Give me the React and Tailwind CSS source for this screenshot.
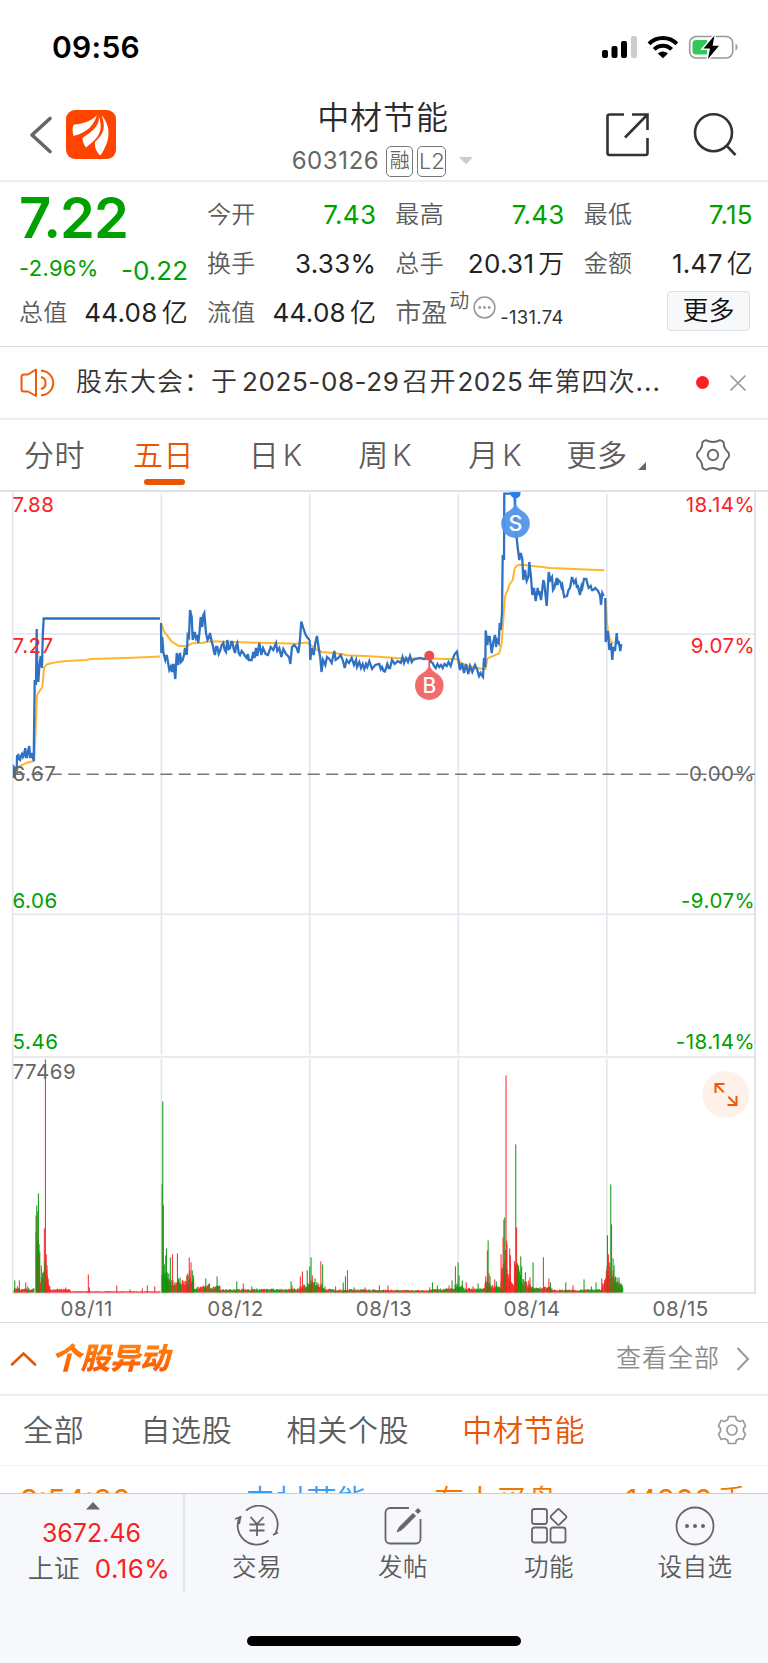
import React from 'react';

const UP = '#fb2226';
const DOWN = '#0a980a';

const quotes = [
  { label: '今开', value: '7.43', color: 'text-[#00a000]' },
  { label: '最高', value: '7.43', color: 'text-[#00a000]' },
  { label: '最低', value: '7.15', color: 'text-[#00a000]' },
  { label: '换手', value: '3.33%', color: 'text-[#222]' },
  { label: '总手', value: '20.31', unit: '万', color: 'text-[#222]' },
  { label: '金额', value: '1.47', unit: '亿', color: 'text-[#222]' },
];

// price and average lines, one polyline per trading day
const priceDays = [
  '14,778 14,767 16.7,770 17,756 18.3,755 19,759 20,760 21,756 22,754 23,757 24,755 25.3,748 26,757 27,757 28,751 29.3,746 30,757 31,757 32,753 33.7,761 34.7,680 36,685 36.7,629 37.3,670 38.3,682 39.3,667 40.7,656 42,668 42.7,637 43.7,618.5 160,618.5',
  '161,623 161.3,653 162.3,637 163.3,652 165.3,660 166.7,655 168,662 169.3,670 170.7,667 172,672 172.8,665 173.7,665 175.3,679 176.7,653 177.7,662 178.3,665 179,656 180,653 181,662 182.7,660 184,655 185,648 186.7,655 187.7,635 189,637 190,610 191.7,617 192.7,640 193.7,637 194.7,632 196,638 197,635 198.3,643 199.5,632 200.7,617 202.3,627 203.3,615 204.3,613 206,633 207.5,640 208.7,638 210,633 211.5,641 212.7,645 214,652 215,655 216,647 217.3,647 218.7,654 220,651 221.7,645 223.3,643 224.7,650 226,652 227.3,640 228.7,649 230,648 231.3,642 232.3,642 233.7,649 235,653 236,646 237.3,643 238.7,653 240,655 241.7,651 243.3,653 245,656 246.7,658 247.7,654 249,660 251.7,660 253.3,652 254.5,658 256,648 257.3,656 259.3,643 261.3,655 263,648 265.7,654 268,655 270.7,647 273.3,650 276,643 277.3,651 279.3,648 281.3,657 283.3,649 286,654 288,656 289.3,658 290.3,664 292,647 294.3,645 296.7,648 298.3,653 299.7,643 301.3,621.5 303.3,628 305.7,635 307.7,638 309.7,640',
  '309.7,640 310.3,660 311.7,648 313.7,655 315.3,643 317,636 318.7,648 320.3,658 321.5,672 323,660 325.3,665 327,657 329.3,659 331.7,663 334.3,651 335.7,660 338.3,658 340.7,655 342.7,660 344.7,668 346.7,660 349,663 351.7,658 354,665 356,660 357,667 359.3,662 361,668 362.7,664 364.3,669 366,664 367.3,667 369.3,661 372,669 375.3,665 379.3,664 380.7,669 382,667 383.7,671 385,671.5 387.3,664 388.7,668 390,668 392,660 394.7,664 397.7,661 400.7,663 402.5,657 404,663 406,658 408,662 410,656 411.7,662 413,660 415.7,659 420,658 424,659 427,658 429.3,656 431,662 432.7,663 434,666 435.7,668 437.5,664 439.3,667 441,665 442.7,668 444.5,664 446.7,666 448.5,662 450.7,666 452.7,659 454.7,654 457,651.5 458.3,660',
  '458.3,660 460,670 462,663 464,673 466,664 468.3,674 470,666 472.3,672 475,665 477.3,670 479,676 480.5,673 481.5,675 483,677 484,658 485.3,667 485.7,630.5 487.3,645 488.3,637 489.7,637 491.7,653 493.3,642 495,635 496,647 497,640 498.7,643 499.7,623 500.7,630 502,613 502.7,555 504,560 504.3,493.7 514.7,493.7 515,515 516.3,535 518,550 519.3,560 520.7,553 522.3,559 523.3,580 525,570 526,577 526.7,581 528.3,577 529.3,562 531,577 532.3,595 534,588 535.7,601 537.7,588 538.5,595 539.3,591 541,600 542,592 543.3,580 544.3,583 545,590 546.7,606 548.7,572 550.3,580 552,577 553,590 554.3,588 556.7,578 557.5,585 558.3,580 560.3,582 561.5,587 562.3,585 563.5,593 564.3,597 567,596 568.5,590 570,588 572,577 574,583 575.7,580 577,588 577.7,585 580,595 581.5,586 582.3,588 584,579 586.3,579 588,586 588.7,588 590.7,586 592,590 593.3,590 595.3,588 598,591 600,595 601,605 602.3,593 603.7,596',
  '605.3,598 605.7,642 607,636 608,631 609.3,650 611,643 612.3,660 613.3,647 615,651 616.7,633 617.7,644 618.5,641 620.3,651 621.3,644',
];

const averageDays = [
  'M14 778 L16.7 770 20 766 27 762.7 34.3 761 37 695 42.3 687 44 668 46.7 664.5 Q52 662.5 66.7 661 L86.7 660 90 659 133 657.7 160 656.5',
  'M161 622.7 Q163.5 631 165 632.7 L171.7 641.7 178 645.7 186.7 646.3 191.7 643.3 201.7 643 210 641.3 250 642.5 296.7 643.7 306.7 642.5 310 644.5',
  'M310 644.5 L316.7 649.5 321.7 652 330 652.7 341.7 654 346.7 655.3 370 656.3 396.7 658 426.7 658.5 458.3 659.3',
  'M458.3 659.3 L460.7 663.3 466.7 665.5 473.3 667.3 483.3 669 485.7 669 487.3 658.3 499.3 653.3 501.7 643.3 503.3 620 505 596.7 507.7 590 509.3 585 512.7 580 514.7 568.3 517.3 565.3 523.3 564.7 530 565.7 540 566.7 550 568 580 569.3 604.3 570.3',
  'M605.7 600 L607 622 608 632 610.5 641 613.5 643',
];

// isolated bars: x, height, rising (1) or falling (0)
const peaks = [
  [14.7, 12, 0], [17.3, 6, 1], [19.3, 12, 1], [25.7, 10, 1], [27.7, 6, 0], [36, 77, 1], [36.7, 87, 0], [37.7, 81, 1], [38.4, 99, 0], [39.3, 37, 1],
  [41.3, 27, 1], [44.3, 64, 1], [44.8, 31, 0], [45.4, 233, 1], [46.2, 38, 1], [47, 27, 1], [48, 13, 1], [65.7, 5, 1], [88.3, 18, 1], [89.3, 5, 1],
  [116.7, 7, 1], [130, 3, 1], [142.3, 4, 1], [147.3, 7, 1], [154.7, 6, 1],
  [162.1, 108, 0], [162.7, 191, 0], [163.4, 87, 1], [164.3, 28, 0], [165.7, 37, 0], [166.4, 44, 0], [167.3, 20, 0], [168.7, 19, 0], [170.3, 35, 0],
  [172.4, 38, 1], [177.4, 39, 1], [178.3, 14, 0], [180, 15, 0], [184, 11, 1], [186.7, 17, 1], [187.7, 19, 0], [189.2, 35, 1], [190, 22, 1],
  [191, 30, 1], [192.3, 22, 0], [193.3, 17, 0], [205.7, 14, 0], [217, 16, 0], [236.7, 11, 0], [243.3, 9, 1], [251.7, 6, 0], [291, 11, 0],
  [292, 7, 1], [300.3, 16, 1], [302.4, 21, 1], [307.2, 22, 0], [309.7, 26, 0], [311, 35, 0], [312.3, 17, 1], [315, 14, 0], [320.8, 31, 1], [322.6, 28, 0],
  [335.5, 6, 1], [343.2, 10, 0], [345.4, 16, 0], [347.4, 22, 1], [354, 5, 0], [365, 5, 1], [379.4, 7, 1], [388, 7, 1], [429.7, 5, 1], [432.4, 10, 0],
  [437.3, 7, 0], [449, 7, 1], [452, 12, 0], [455.4, 26, 1], [458, 30, 0], [459, 17, 0], [462.3, 12, 0], [466.2, 10, 1], [473, 6, 1], [478, 9, 0],
  [485.7, 16, 1], [487.3, 42, 1], [488.1, 52, 0], [489, 19, 1], [490, 16, 0], [494.7, 13, 1], [496.3, 11, 0], [501, 38, 1], [502, 25, 1],
  [503, 55, 1], [503.8, 73, 1], [504.7, 75, 0], [506, 217, 1], [506.8, 48, 1], [509.6, 44, 1], [510.4, 37, 1], [514.4, 31, 1], [515.7, 148, 0],
  [516.5, 65, 1], [517.4, 29, 0], [518.4, 27, 0], [520.7, 36, 0], [521.6, 26, 0], [525.4, 20, 0], [528.7, 12, 1], [530, 15, 1], [533, 30, 0],
  [543.4, 35, 1], [548.8, 14, 1], [550.4, 10, 0], [565.7, 10, 0], [573, 7, 1], [584, 13, 0], [591.4, 6, 1], [596, 10, 0], [601.7, 14, 1],
  [606.3, 22, 1], [607.4, 57, 0], [608.4, 38, 1], [609.3, 30, 1], [610.7, 108, 0], [611.5, 68, 1], [613, 34, 0], [614, 27, 0], [615.4, 16, 1],
  [617, 15, 0], [619, 15, 0], [621, 9, 0],
];

// stretches of ordinary trading: from, to, height at each end, share of falling minutes
const quiet = [
  [14, 34, 4, 4, 0.45], [36, 40, 70, 34, 0.6], [40, 46, 13, 22, 0.4], [46, 50, 24, 6, 0], [50, 70, 3, 4, 0], [70, 160, 1.2, 1, 0],
  [162, 168, 28, 16, 0.9], [168, 188, 12, 11, 0.5], [188, 194, 16, 12, 0.35], [194, 210, 4, 8, 0.5], [210, 220, 4, 7, 0.8],
  [220, 300, 3, 3.5, 0.6], [300, 310, 6, 9, 0.5], [310, 325, 12, 6, 0.6], [325, 345, 3.5, 2.5, 0.5], [345, 430, 3, 2, 0.5],
  [430, 455, 3, 4, 0.5], [455, 464, 9, 5, 0.5], [464, 485, 4, 4, 0.5], [485, 492, 12, 6, 0.6], [492, 501, 7, 5, 0.4],
  [501, 507, 18, 48, 0.3], [507, 515, 22, 5, 0], [515, 521, 27, 18, 0.9], [521, 532, 13, 6, 0.6], [532, 552, 5, 5, 0.5],
  [552, 602, 2.5, 3, 0.5], [602, 607, 7, 16, 0.4], [607, 614, 24, 20, 0.6], [614, 623, 14, 6, 0.6],
];

const volumeBars = () => {
  let seed = 17;
  const random = () => {
    seed = (seed * 16807) % 2147483647;
    return seed / 2147483647;
  };
  const bars = [];
  quiet.forEach(([from, to, h0, h1, falling]) => {
    for (let x = from; x < to; x += 0.62) {
      const h = h0 + ((h1 - h0) * (x - from)) / (to - from);
      bars.push([x, h * (0.55 + random() * 0.6), random() < falling ? 0 : 1]);
    }
  });
  return bars.concat(peaks);
};

const bars = volumeBars();
const dayLines = [161.4, 309.8, 458.3, 606.8];

const GridLabel = ({ y, fill, left, right }) => (
  <>
    <text x="12.6" y={y} fill={fill}>{left}</text>
    {right && <text x="755.2" y={y} fill={fill} textAnchor="end">{right}</text>}
  </>
);

const Chart = () => (
  <svg className="block" width="768" height="830" viewBox="0 492 768 830" fontSize="20.5" letterSpacing="0.5" fontFamily="Inter, sans-serif">
    <g stroke="#e2e5ee" strokeWidth="1.6">
      <path d="M12.7 492V1293M13 634H755M13 914.3H755" fill="none" />
      {dayLines.map((x) => (
        <path key={x} d={`M${x} 494V1055M${x} 1059V1292`} />
      ))}
      <path d="M13 1057H755" stroke="#e9ebf0" strokeWidth="2" />
      <path d="M755 492V1293M12 1293H756" stroke="#dcdce6" fill="none" />
    </g>
    <path d="M13 774.2H755" stroke="#777" strokeWidth="1.5" strokeDasharray="12 6.42" />

    <g>
      {bars.map(([x, h, up], i) => (
        <rect key={i} x={x - 0.5} y={1292.4 - h} width="1.1" height={h} fill={up ? UP : DOWN} fillOpacity="0.9" />
      ))}
    </g>

    <g fill="none" strokeWidth="2" strokeLinejoin="round">
      {averageDays.map((d, i) => (
        <path key={i} d={d} stroke="#ffb52e" />
      ))}
      {priceDays.map((points, i) => (
        <polyline key={i} points={points} stroke="#2f72c3" strokeWidth="2.3" strokeLinejoin="miter" />
      ))}
    </g>

    <g letterSpacing="0">
      <path d="M429.3 655V668" stroke="#f04a4a" strokeWidth="1.6" />
      <circle cx="429.3" cy="655.8" r="5" fill="#f04a4a" />
      <path d="M429.3 665 Q431 670 436 673 A14.3 14.3 0 1 1 422.6 673 Q427.6 670 429.3 665Z" fill="#f26b6b" />
      <text x="429.5" y="692.8" fill="#fff" fontSize="21" fontWeight="500" textAnchor="middle">B</text>
      <path d="M510.5 492H520.5V493.5A5 5 0 0 1 510.5 493.5Z M514.7 496H516.3V506H514.7Z" fill="#2b7de8" />
      <path d="M515.5 503 Q517 508 522.2 511 A14.3 14.3 0 1 1 508.8 511 Q514 508 515.5 503Z" fill="#5293ea" fillOpacity="0.95" />
      <text x="515.5" y="530.8" fill="#fff" fontSize="21.5" fontWeight="500" textAnchor="middle">S</text>
    </g>

    <GridLabel y="511.6" fill={UP} left="7.88" right="18.14%" />
    <GridLabel y="652.7" fill={UP} left="7.27" right="9.07%" />
    <GridLabel y="780.5" fill="#666" left="6.67" right="0.00%" />
    <GridLabel y="908" fill="#00a000" left="6.06" right="-9.07%" />
    <GridLabel y="1049.3" fill="#00a000" left="5.46" right="-18.14%" />
    <GridLabel y="1079" fill="#666" left="77469" />

    <g fill="#666" textAnchor="middle">
      <text x="86.7" y="1315.6">08/11</text>
      <text x="235.5" y="1315.6">08/12</text>
      <text x="384" y="1315.6">08/13</text>
      <text x="532" y="1315.6">08/14</text>
      <text x="680.7" y="1315.6">08/15</text>
    </g>

    <circle cx="725.7" cy="1094.6" r="23.5" fill="#fef1e9" />
    <path d="M715.5 1093V1084H724.5M715.5 1084L723.7 1092.2M736.5 1096V1105H727.5M736.5 1105L728.3 1096.8" fill="none" stroke="#ee5a0a" strokeWidth="2" />
  </svg>
);

const StatusIcons = () => (
  <svg width="140" height="26" viewBox="600 34 140 26">
    <rect x="602" y="50" width="6" height="8" rx="2" />
    <rect x="611.5" y="46" width="6" height="12" rx="2" />
    <rect x="621" y="41" width="6" height="17" rx="2" />
    <rect x="631" y="36" width="6" height="22" rx="2" fill="#ccc" />
    <g fill="none" stroke="#000" strokeWidth="4">
      <path d="M649 43.8a19.5 19.5 0 0 1 27.8 0" />
      <path d="M654.2 49.4a12 12 0 0 1 17.4 0" />
    </g>
    <path d="M657.8 53.4a7.5 7.5 0 0 1 10.2 0L662.9 58.3Z" />
    <rect x="689.7" y="36.5" width="43" height="21.5" rx="6.5" fill="none" stroke="#999" strokeWidth="1.6" />
    <path d="M696 40H707V54.5H696a3.5 3.5 0 0 1-3.5-3.5V43.5a3.5 3.5 0 0 1 3.5-3.5Z" fill="#34c759" />
    <path d="M735.5 43.5a4.5 4.5 0 0 1 0 7.5Z" fill="#999" />
    <path d="M714.5 35.5L703.5 48.5H710L708 59L719 45.8H712.6Z" stroke="#fff" strokeWidth="3" paintOrder="stroke" />
  </svg>
);

const Logo = () => (
  <svg width="50" height="50" viewBox="66 110 50 50">
    <rect x="66" y="110" width="50" height="49" rx="9" fill="#ff4400" />
    <g fill="#fff">
      <path d="M97 115C93 120 84 124 74 124.5C72 127 72.5 131 73.5 136C80 134 92 131 97 115Z" />
      <path d="M98.5 115C101 126 91 132 82.5 138C82.5 142 84 145 86 147.5C96 139 105 134 98.5 115Z" />
      <path d="M101.5 115C106 127 104 134 95 142C94.5 147 96 152 100.5 155.5C106 147 115 131 101.5 115Z" />
    </g>
  </svg>
);

const Header = () => (
  <header className="flex h-[88px] items-start justify-between border-b-2 border-[#eee] pl-[28px] pr-[30px]">
    <div className="mt-[16px] flex w-[230px] items-center gap-[12px]">
      <svg width="26" height="40" viewBox="28 115 26 40" fill="none" stroke="#666" strokeWidth="3.6" strokeLinecap="round" strokeLinejoin="round">
        <path d="M50 118.5L32 135L50 151.5" />
      </svg>
      <Logo />
    </div>
    <div className="flex flex-1 flex-col items-center pt-[1px]">
      <h1 className="text-[32px] font-[350] leading-[46px] tracking-[0.9px] text-[#2a2a2a]">中材节能</h1>
      <div className="flex h-[40px] items-center text-[24px] leading-none text-[#666]">
        <span className="tracking-[0.6px]">603126</span>
        <span className="ml-[7px] flex h-[31px] w-[27px] items-center justify-center rounded-[5px] border border-[#777] text-[20px] font-[350]">融</span>
        <span className="ml-[4px] flex h-[31px] w-[29px] items-center justify-center rounded-[5px] border border-[#777] text-[22px] font-[350]">L2</span>
        <svg className="ml-[12px]" width="16" height="8"><path d="M1 0H15L8 7.5Z" fill="#ccc" /></svg>
      </div>
    </div>
    <div className="mt-[16px] flex w-[230px] justify-end">
      <svg width="134" height="48" viewBox="604 110 134 48" fill="none" stroke="#333" strokeWidth="2.6">
        <path d="M624 114.5H609.5a2 2 0 0 0-2 2V153a2 2 0 0 0 2 2H645.5a2 2 0 0 0 2-2V138M632 114.5H647.5V130M647 115L625 137.5" />
        <circle cx="713.5" cy="132.7" r="18.5" />
        <path d="M726.5 145.7L735.5 155" />
      </svg>
    </div>
  </header>
);

const Quote = ({ label, value, unit, color }) => (
  <div className="flex items-center justify-between">
    <span className="text-[24px] font-[350] tracking-[0.3px] text-[#5c5c5c]">{label}</span>
    <span className={`-mr-[1px] text-[26px] tracking-[0.3px] ${color}`}>
      {value}
      {unit && <span className="ml-[4px] font-[350]">{unit}</span>}
    </span>
  </div>
);

const QuotePanel = () => (
  <section className="flex h-[165px] gap-[20px] border-b border-[#ddd] pl-[19px] pr-[16px] pt-[8px] leading-none">
    <div className="w-[168px] shrink-0 text-[#00a000]">
      <div className="h-[60px] pt-[2px] text-[56px] font-semibold leading-[52px] tracking-[-1px]">7.22</div>
      <div className="flex h-[38px] justify-between">
        <span className="pt-[7px] text-[22px] tracking-[0.3px]">-2.96%</span>
        <span className="-mr-[1px] pt-[8px] text-[26px]">-0.22</span>
      </div>
      <div className="h-[49px] *:h-full">
        <Quote label="总值" value="44.08" unit="亿" color="text-[#222]" />
      </div>
    </div>
    <div className="grid flex-1 grid-cols-3 grid-rows-[49px_49px_49px] gap-x-[20px]">
      {quotes.map((quote) => (
        <Quote key={quote.label} {...quote} />
      ))}
      <Quote label="流值" value="44.08" unit="亿" color="text-[#222]" />
      <div className="flex items-center text-[#5c5c5c]">
        <span className="text-[26px] font-[350]">市盈</span>
        <span className="mb-[24px] ml-[2px] text-[20px] font-[350]">动</span>
        <svg className="mb-[11px] ml-[4px] shrink-0" width="23" height="23" fill="none" stroke="#999" strokeWidth="1.5">
          <circle cx="11.5" cy="11.5" r="10.4" />
          <path d="M5.5 11.5h2.6M10.2 11.5h2.6M14.9 11.5h2.6" strokeWidth="2.6" />
        </svg>
        <span className="ml-auto mt-[9px] text-[18.5px] tracking-[0.3px] text-[#333]">-131.74</span>
      </div>
      <div className="flex items-center justify-end">
        <button className="mb-[4px] mr-[2px] flex h-[40px] w-[83px] items-center justify-center rounded-[4px] border border-[#dcdfe6] bg-[#f7f8fa] text-[26px] font-[350] text-[#111]">更多</button>
      </div>
    </div>
  </section>
);

const Notice = () => (
  <section className="flex h-[73px] items-center border-b-2 border-[#eee] pl-[20px] text-[26px] leading-none text-[#333]">
    <svg className="shrink-0" width="36" height="32" viewBox="20 366 36 32" fill="none" stroke="#ee5a0a" strokeWidth="2" strokeLinejoin="round">
      <path d="M36 368.5V395L28 390.5H24a2.5 2.5 0 0 1-2.5-2.5V376a2.5 2.5 0 0 1 2.5-2.5H28Z" />
      <path d="M41 369.8a12.2 12.2 0 0 1 0 24.4M41 376a6.2 6.2 0 0 1 0 12" />
    </svg>
    <p className="mb-[2px] ml-[20px] w-[600px] whitespace-nowrap">
      <span className="font-[350] tracking-[1px]">股东大会：于</span>
      <span className="ml-[4px] mr-[3px] tracking-[0.6px]">2025-08-29</span>
      <span className="font-[350] tracking-[1px]">召开</span>
      <span className="ml-[1px] mr-[4px] tracking-[0.5px]">2025</span>
      <span className="font-[350] tracking-[1px]">年第四次</span><span className="tracking-[1px]">...</span>
    </p>
    <i className="ml-[20px] size-[13px] rounded-full bg-[#f82222]" />
    <svg className="ml-[20px]" width="18" height="18" stroke="#999" strokeWidth="1.7">
      <path d="M1.5 1.5L16.5 16.5M16.5 1.5L1.5 16.5" />
    </svg>
  </section>
);

const PeriodTabs = () => (
  <nav className="flex h-[72px] items-center border-b-2 border-[#dfe0e8] text-[30px] font-[350] leading-none text-[#5c5c5c] *:text-center">
    <span className="w-[109px] tracking-[0.5px]">分时</span>
    <span className="relative w-[109px] tracking-[0.5px] text-[#ea5504]">
      五日
      <i className="absolute -bottom-[15px] left-[35px] h-[6px] w-[41px] rounded-full bg-[#ea5504]" />
    </span>
    <span className="w-[115px]">日<span className="ml-[4px]">K</span></span>
    <span className="w-[104px]">周<span className="ml-[4px]">K</span></span>
    <span className="w-[116px]">月<span className="ml-[4px]">K</span></span>
    <span className="w-[88px] tracking-[0.5px]">更多</span>
    <svg className="-ml-[3px] mt-[22px]" width="8" height="8"><path d="M8 0V8H0Z" fill="#666" /></svg>
    <svg className="ml-[49px]" width="36" height="36" viewBox="-18 -18 36 36" fill="none" stroke="#666" strokeWidth="1.9" strokeLinejoin="round">
      <path d="M-7 -14.8Q-3.8 -13 0 -13Q3.8 -13 7 -14.8Q9.5 -14.2 10.6 -12.6Q10.6 -8.5 12.6 -5.8Q14 -3.8 15.7 -2Q16.3 0 15.7 2Q14 3.8 12.6 5.8Q10.6 8.5 10.6 12.6Q9.5 14.2 7 14.8Q3.8 13 0 13Q-3.8 13 -7 14.8Q-9.5 14.2 -10.6 12.6Q-10.6 8.5 -12.6 5.8Q-14 3.8 -15.7 2Q-16.3 0 -15.7 -2Q-14 -3.8 -12.6 -5.8Q-10.6 -8.5 -10.6 -12.6Q-9.5 -14.2 -7 -14.8Z" />
      <circle r="5.2" />
    </svg>
  </nav>
);

const MoveSection = () => (
  <section>
    <div className="flex h-[73px] items-center border-b-2 border-[#eee] pl-[10px] pr-[18px]">
      <svg width="27" height="16" fill="none" stroke="#ea5504" strokeWidth="2.6" strokeLinecap="round">
        <path d="M2 13.5L13.5 2.5L25 13.5" />
      </svg>
      <h2 className="mb-[2px] ml-[14px] bg-gradient-to-b from-[#ff8a10] to-[#ff4e00] bg-clip-text pr-[4px] text-[30px] font-black italic leading-[40px] tracking-[-0.5px] text-transparent">个股异动</h2>
      <span className="ml-auto text-[25px] font-[350] leading-none tracking-[1px] text-[#8c8c8c]">查看全部</span>
      <svg className="ml-[16px]" width="14" height="24" fill="none" stroke="#999" strokeWidth="2">
        <path d="M1.5 1L12 12L1.5 23" />
      </svg>
    </div>
    <nav className="flex h-[70px] items-center border-b border-[#f2f2f2] pb-[2px] pl-[23px] text-[30px] font-[350] leading-none tracking-[0.7px] text-[#5c5c5c]">
      <span>全部</span>
      <span className="ml-[56px]">自选股</span>
      <span className="ml-[54px]">相关个股</span>
      <span className="ml-[53px] text-[#ea5504]">中材节能</span>
      <svg className="ml-auto mr-[21px]" width="30" height="30" viewBox="-15 -15 30 30" fill="none" stroke="#999" strokeWidth="1.7" strokeLinejoin="round">
        <path d="M-3.5 -13.5H3.5L4.5 -10Q6 -9.5 7.5 -8.5L11 -9.5L13.5 -4L11.5 -1.5V1.5L13.5 4L11 9.5L7.5 8.5Q6 9.5 4.5 10L3.5 13.5H-3.5L-4.5 10Q-6 9.5 -7.5 8.5L-11 9.5L-13.5 4L-11.5 1.5V-1.5L-13.5 -4L-11 -9.5L-7.5 -8.5Q-6 -9.5 -4.5 -10Z" />
        <circle r="5" />
      </svg>
    </nav>
    <div className="flex h-[27px] items-start overflow-hidden pl-[20px] pr-[21px] pt-[17px] text-[30px] leading-[34px] text-[#f07800]">
      <span className="w-[225px]">9:54:30</span>
      <span className="w-[189px] font-[350] tracking-[0.7px] text-[#3a9bf5]">中材节能</span>
      <span className="font-[350] tracking-[1px]">有人买盘</span>
      <span className="ml-auto">14200<span className="ml-[4px] font-[350]">手</span></span>
    </div>
  </section>
);

const NavItem = ({ label, children }) => (
  <div className="flex w-[146px] flex-col items-center pt-[11px]">
    <svg width="46" height="42" viewBox="-23 -21 46 42" fill="none" stroke="#666" strokeWidth="1.8">
      {children}
    </svg>
    <span className="mt-[7px] text-[24.5px] font-[350] leading-[26px] tracking-[0.5px] text-[#5c5c5c]">{label}</span>
  </div>
);

const BottomNav = () => (
  <footer className="h-[170px] border-t border-[#c9cdd6] bg-[#f7f8fb] text-[#666]">
    <div className="flex h-[98px]">
      <div className="flex w-[185px] shrink-0 flex-col items-center border-r-2 border-[#e3e5ea] pt-[8px] text-[25px] leading-none">
        <svg className="ml-[2px]" width="14" height="8"><path d="M7 0L14 7.5H0Z" fill="#666" /></svg>
        <span className="mt-[11px] text-[#f82222]">3672.46</span>
        <div className="mt-[10px] flex items-center pl-[15px]">
          <span className="text-[26px] font-[350] text-[#5c5c5c]">上证</span>
          <span className="ml-[15px] text-[26px] tracking-[0.5px] text-[#f82222]">0.16%</span>
        </div>
      </div>
      <div className="-ml-[1px] flex">
        <NavItem label="交易">
          <path d="M-11 -15.5A19 19 0 0 1 18.5 7.5M11.5 14.5A19 19 0 0 1 -17.5 -8.5M-22 -7L-16.5 -9L-18 -2M16 9L21 6.5M18.5 7.5L16 9" />
          <path d="M-6.5 -9L0 -2L6.5 -9M0 -2V10M-7.5 -1.5H7.5M-7.5 4.5H7.5" />
        </NavItem>
        <NavItem label="发帖">
          <path d="M6 -18H-13a4.5 4.5 0 0 0-4.5 4.5V13a4.5 4.5 0 0 0 4.5 4.5H13a4.5 4.5 0 0 0 4.5-4.5V-7" />
          <path d="M-6 6L-3.5 1L10 -12.5L12.5 -10L-1 3.5ZM12.5 -15L15 -17.5L17.5 -15L15 -12.5Z" fill="#666" strokeWidth="1" />
        </NavItem>
        <NavItem label="功能">
          <rect x="-17" y="-17" width="15" height="15" rx="2.5" />
          <rect x="-17" y="1.5" width="15" height="15" rx="2.5" />
          <rect x="1.5" y="1.5" width="15" height="15" rx="2.5" />
          <rect x="3.5" y="-15" width="12" height="12" rx="1.5" transform="rotate(45 9.5 -9)" />
        </NavItem>
        <NavItem label="设自选">
          <circle r="18.5" />
          <path d="M-8 0h.01M0 0h.01M8 0h.01" strokeWidth="4" strokeLinecap="round" />
        </NavItem>
      </div>
    </div>
    <div className="mx-auto mt-[44px] h-[10px] w-[274px] rounded-full bg-black" />
  </footer>
);

const App = () => {
  return (
    <div className="h-[1663px] w-[768px] overflow-hidden bg-white font-['Inter','Noto_Sans_CJK_SC',sans-serif]">
      <div className="flex h-[94px] items-start justify-between pl-[52px] pr-[28px] pt-[34px]">
        <span className="text-[30px] font-semibold leading-[26px] tracking-[0.3px] text-black">09:56</span>
        <StatusIcons />
      </div>
      <Header />
      <QuotePanel />
      <Notice />
      <PeriodTabs />
      <Chart />
      <div className="border-t border-[#ddd]" />
      <MoveSection />
      <BottomNav />
    </div>
  );
};

export default App;
